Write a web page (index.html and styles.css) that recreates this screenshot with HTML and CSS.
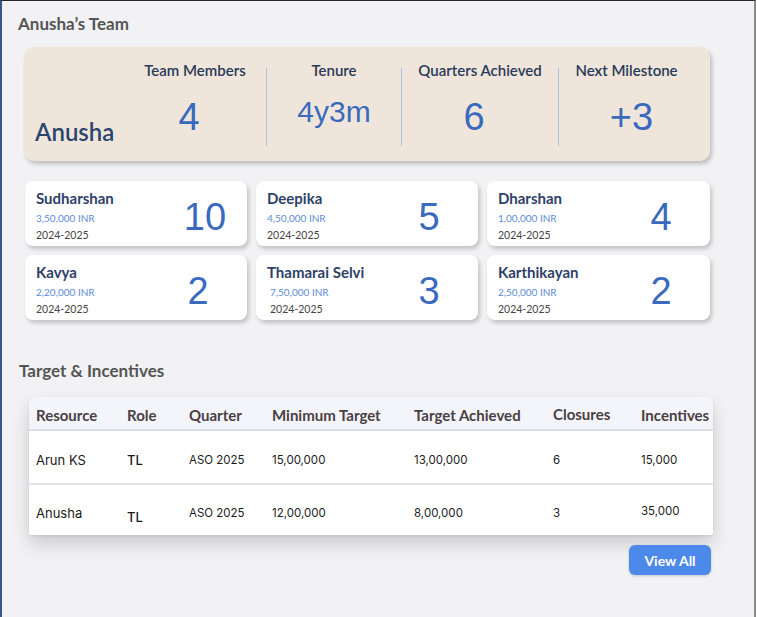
FILE: index.html
```html
<!DOCTYPE html>
<html lang="en">
<head>
<meta charset="utf-8">
<title>Anusha's Team</title>
<link rel="stylesheet" href="styles.css">
</head>
<body>
<div class="frame">
  <h1 class="title">Anusha’s Team</h1>

  <section class="summary">
    <div class="lead">Anusha</div>
    <div class="stat">
      <div class="label">Team Members</div>
      <div class="val shift-l">4</div>
    </div>
    <div class="stat sep">
      <div class="label">Tenure</div>
      <div class="val sm">4y3m</div>
    </div>
    <div class="stat sep">
      <div class="label">Quarters Achieved</div>
      <div class="val shift-l">6</div>
    </div>
    <div class="stat sep">
      <div class="label">Next Milestone</div>
      <div class="val shift-r">+3</div>
    </div>
  </section>

  <section class="members">
    <div class="member">
      <div class="info">
        <div class="name">Sudharshan</div>
        <div class="inr">3,50,000 INR</div>
        <div class="year">2024-2025</div>
      </div>
      <div class="count wide">10</div>
    </div>
    <div class="member">
      <div class="info">
        <div class="name">Deepika</div>
        <div class="inr">4,50,000 INR</div>
        <div class="year">2024-2025</div>
      </div>
      <div class="count">5</div>
    </div>
    <div class="member">
      <div class="info">
        <div class="name">Dharshan</div>
        <div class="inr">1,00,000 INR</div>
        <div class="year">2024-2025</div>
      </div>
      <div class="count">4</div>
    </div>
    <div class="member">
      <div class="info">
        <div class="name">Kavya</div>
        <div class="inr">2,20,000 INR</div>
        <div class="year">2024-2025</div>
      </div>
      <div class="count">2</div>
    </div>
    <div class="member">
      <div class="info indent">
        <div class="name">Thamarai Selvi</div>
        <div class="inr">7,50,000 INR</div>
        <div class="year">2024-2025</div>
      </div>
      <div class="count">3</div>
    </div>
    <div class="member">
      <div class="info">
        <div class="name">Karthikayan</div>
        <div class="inr">2,50,000 INR</div>
        <div class="year">2024-2025</div>
      </div>
      <div class="count">2</div>
    </div>
  </section>

  <h2 class="title sub">Target &amp; Incentives</h2>

  <section class="table">
    <div class="row head">
      <div>Resource</div>
      <div>Role</div>
      <div>Quarter</div>
      <div>Minimum Target</div>
      <div>Target Achieved</div>
      <div class="hi">Closures</div>
      <div>Incentives</div>
    </div>
    <div class="row body r1">
      <div class="big">Arun KS</div>
      <div class="big role">TL</div>
      <div>ASO 2025</div>
      <div>15,00,000</div>
      <div>13,00,000</div>
      <div>6</div>
      <div>15,000</div>
    </div>
    <div class="row body r2">
      <div class="big">Anusha</div>
      <div class="big role lo">TL</div>
      <div>ASO 2025</div>
      <div>12,00,000</div>
      <div>8,00,000</div>
      <div>3</div>
      <div class="up">35,000</div>
    </div>
  </section>

  <div class="actions">
    <button class="btn">View All</button>
  </div>
</div>
</body>
</html>
```

FILE: styles.css
```css
* { box-sizing: border-box; }

html, body {
  margin: 0;
  padding: 0;
  background: #ffffff;
}

.frame {
  width: 756px;
  height: 617px;
  background: #f2f2f4;
  border-top: 1px solid #262626;
  border-left: 2px solid #3a5587;
  border-right: 2px solid #8c8c8c;
  font-family: "Lato", "Liberation Sans", sans-serif;
  overflow: hidden;
}

.title {
  margin: 13px 0 0 16px;
  font-size: 17px;
  line-height: 20px;
  font-weight: 700;
  color: #555555;
}

.title.sub {
  margin: 41px 0 0 17px;
}

/* summary card */
.summary {
  margin: 13px 0 0 22px;
  width: 686px;
  height: 114px;
  padding: 21px 16px 15px 0;
  background: #f0e5db;
  border-radius: 10px;
  box-shadow: 2px 3px 4px rgba(0, 0, 0, 0.22);
  display: grid;
  grid-template-columns: 100px 142px 135px 157px 1fr;
}

.lead {
  align-self: end;
  padding-left: 11px;
  font-size: 24px;
  line-height: 28px;
  font-weight: 600;
  color: #2b456d;
}

.stat {
  display: flex;
  flex-direction: column;
  align-items: center;
}

.stat.sep {
  border-left: 1px solid #a9c3ea;
}

.label {
  margin-top: -7px;
  font-size: 15px;
  line-height: 19px;
  font-weight: 600;
  color: #283a58;
  white-space: nowrap;
}

.val {
  margin-top: 17px;
  font-family: "Liberation Sans", Arial, sans-serif;
  font-size: 38px;
  line-height: 40px;
  color: #3a6abd;
}

.val.shift-l {
  margin-right: 12px;
}

.val.shift-r {
  margin-left: 10px;
}

.val.sm {
  margin-top: 12px;
  font-size: 30px;
}

/* member cards */
.members {
  margin: 20px 0 0 23px;
  display: grid;
  grid-template-columns: 222px 222px 223px;
  grid-auto-rows: 65px;
  column-gap: 9px;
  row-gap: 9px;
}

.member {
  background: #ffffff;
  border-radius: 8px;
  box-shadow: 2px 3px 4px rgba(0, 0, 0, 0.2);
  padding: 8px 19px 0 11px;
  display: grid;
  grid-template-columns: 1fr 60px;
}

.info.indent .inr,
.info.indent .year {
  padding-left: 3px;
}

.name {
  font-size: 15px;
  line-height: 18px;
  font-weight: 700;
  color: #2e4168;
  white-space: nowrap;
}

.inr {
  margin-top: 4px;
  font-size: 10px;
  line-height: 14px;
  color: #5f8cd6;
}

.year {
  margin-top: 3px;
  font-size: 10.5px;
  line-height: 14px;
  color: #444444;
}

.count {
  align-self: center;
  margin-top: -2px;
  text-align: center;
  font-family: "Liberation Sans", Arial, sans-serif;
  font-size: 38px;
  line-height: 40px;
  color: #3a6abd;
}

.count.wide {
  margin-right: -14px;
}

/* table */
.table {
  margin: 16px 0 0 27px;
  width: 684px;
  background: #ffffff;
  border-radius: 8px 8px 2px 2px;
  box-shadow: 0 9px 18px rgba(0, 0, 0, 0.16), 0 1px 3px rgba(0, 0, 0, 0.08);
  overflow: hidden;
}

.row {
  display: grid;
  grid-template-columns: 91px 62px 83px 142px 139px 88px 1fr;
  padding-left: 7px;
}

.row.head {
  height: 34px;
  padding-top: 9px;
  background: #f4f5fb;
  border-bottom: 2px solid #dcdde9;
  font-size: 15px;
  line-height: 19px;
  font-weight: 700;
  color: #4a4043;
  white-space: nowrap;
}

.row.head .hi {
  margin-top: -1px;
}

.row.body {
  align-items: center;
  font-family: "Inter", "Liberation Sans", sans-serif;
  font-size: 11.5px;
  line-height: 16px;
  color: #1b1b1b;
}

.row.r1 {
  height: 54px;
  padding-top: 6px;
  border-bottom: 2px solid #e3e3ea;
}

.row.r2 {
  height: 50px;
  padding-top: 6px;
}

.row.body .big {
  font-size: 13px;
}

.row.body .role {
  font-weight: 500;
}

.row.body .lo {
  padding-top: 8px;
}

.row.body .up {
  padding-bottom: 4px;
}

.actions {
  width: 684px;
  margin: 10px 0 0 27px;
  display: flex;
  justify-content: flex-end;
  padding-right: 2px;
}

.btn {
  width: 82px;
  height: 30px;
  border: none;
  border-radius: 6px;
  background: #4d89ea;
  box-shadow: 0 1px 3px rgba(0, 0, 0, 0.18);
  color: #ffffff;
  font-family: "Lato", "Liberation Sans", sans-serif;
  font-size: 14px;
  font-weight: 700;
  padding: 0;
}
```
